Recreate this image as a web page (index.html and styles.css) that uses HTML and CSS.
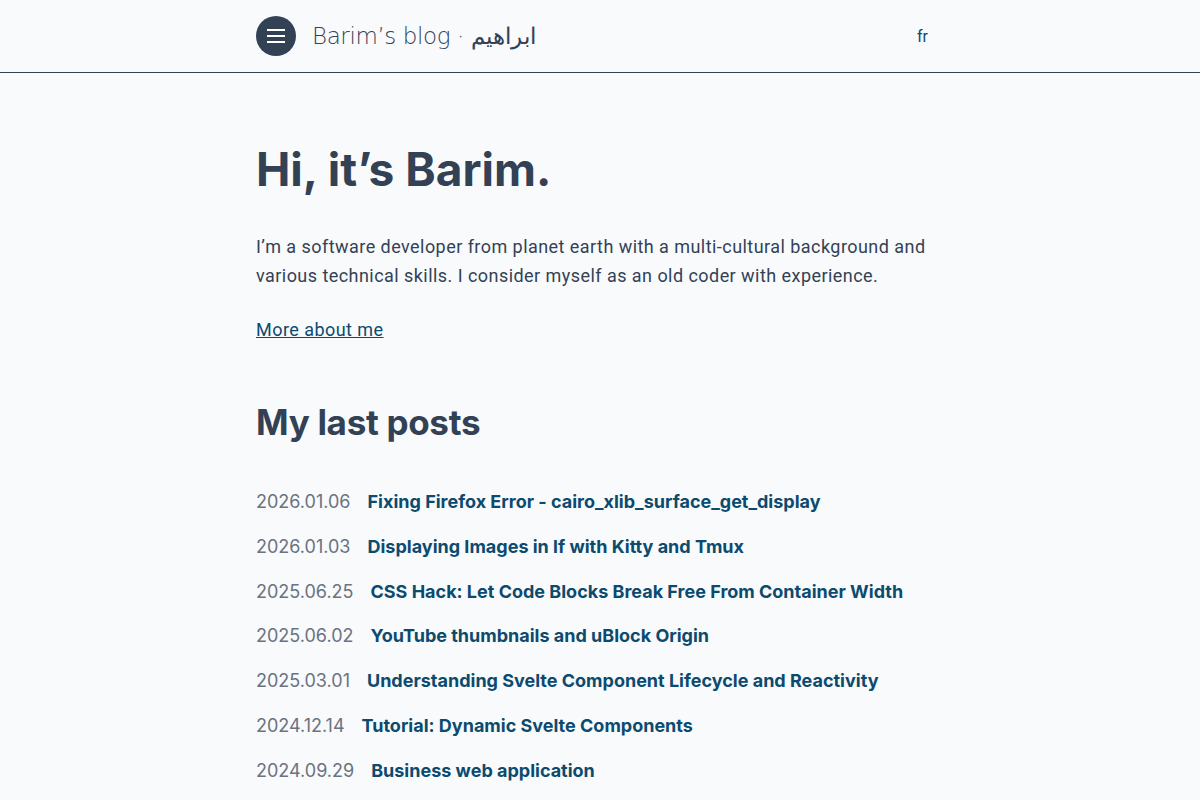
FILE: index.html
```html
<!DOCTYPE html>
<html lang="en">
<head>
  <meta charset="UTF-8">
  <meta name="viewport" content="width=device-width, initial-scale=1.0">
  <title>Barim's blog</title>
  <link rel="stylesheet" href="styles.css">
</head>
<body>
  <header class="site-header">
    <div class="container header-inner">
      <div class="brand">
        <button class="menu-btn" aria-label="Toggle menu">
          <svg width="18" height="14" viewBox="0 0 18 14">
            <path d="M0 1h18M0 7h18M0 13h18" stroke="#fff" stroke-width="2"/>
          </svg>
        </button>
        <a class="site-title" href="/">Barim’s blog · ابراهيم</a>
      </div>
      <a class="lang" href="/fr">fr</a>
    </div>
  </header>

  <main class="container">
    <section class="intro">
      <h1>Hi, it’s Barim.</h1>
      <p>I’m a software developer from planet earth with a multi-cultural background and various technical skills. I consider myself as an old coder with experience.</p>
      <p><a class="more" href="/about">More about me</a></p>
    </section>

    <section class="posts">
      <h2>My last posts</h2>
      <ul class="post-list">
        <li><span class="date">2026.01.06</span><a href="#">Fixing Firefox Error - cairo_xlib_surface_get_display</a></li>
        <li><span class="date">2026.01.03</span><a href="#">Displaying Images in lf with Kitty and Tmux</a></li>
        <li><span class="date">2025.06.25</span><a href="#">CSS Hack: Let Code Blocks Break Free From Container Width</a></li>
        <li><span class="date">2025.06.02</span><a href="#">YouTube thumbnails and uBlock Origin</a></li>
        <li><span class="date">2025.03.01</span><a href="#">Understanding Svelte Component Lifecycle and Reactivity</a></li>
        <li><span class="date">2024.12.14</span><a href="#">Tutorial: Dynamic Svelte Components</a></li>
        <li><span class="date">2024.09.29</span><a href="#">Business web application</a></li>
      </ul>
    </section>
  </main>
</body>
</html>
```

FILE: styles.css
```css
/* General Styles */
body {
  margin: 0;
  font-family: Roboto, "Noto Sans", sans-serif;
  background-color: #f8fafc;
  color: #334155;
}

a {
  color: #0c4a6e;
}

.container {
  max-width: 688px;
  margin: 0 auto;
}

/* Header */
.site-header {
  border-bottom: 1px solid #334155;
}

.header-inner {
  height: 72px;
  display: flex;
  align-items: center;
  justify-content: space-between;
}

.brand {
  display: flex;
  align-items: center;
  gap: 16px;
}

.menu-btn {
  width: 40px;
  height: 40px;
  border-radius: 50%;
  border: none;
  background-color: #334155;
  display: flex;
  align-items: center;
  justify-content: center;
  padding: 0;
  cursor: pointer;
}

.site-title {
  font-family: "DejaVu Sans", sans-serif;
  font-size: 23px;
  font-weight: 300;
  color: #334155;
  text-decoration: none;
  letter-spacing: -0.4px;
}

.lang {
  font-size: 16px;
  text-decoration: none;
  margin-right: 16px;
}

/* Intro */
h1, h2 {
  font-family: Inter, sans-serif;
  font-weight: 700;
  color: #334155;
  margin: 0;
}

h1 {
  font-size: 46px;
  margin-top: 68px;
  margin-bottom: 35px;
}

.intro p {
  font-size: 18px;
  line-height: 29px;
  letter-spacing: 0.45px;
  margin: 0 0 25px;
}

.more {
  text-decoration: underline;
}

/* Posts */
.posts h2 {
  font-size: 35px;
  letter-spacing: -0.3px;
  margin-top: 57px;
  margin-bottom: 48px;
}

.post-list {
  list-style: none;
  margin: 0;
  padding: 0;
}

.post-list li {
  display: flex;
  align-items: baseline;
  gap: 17px;
  font-size: 18px;
  height: 44.8px;
}

.post-list .date {
  font-family: Inter, sans-serif;
  color: #6b7280;
}

.post-list a {
  font-family: Inter, sans-serif;
  font-weight: 700;
  font-size: 18px;
  text-decoration: none;
}
```
